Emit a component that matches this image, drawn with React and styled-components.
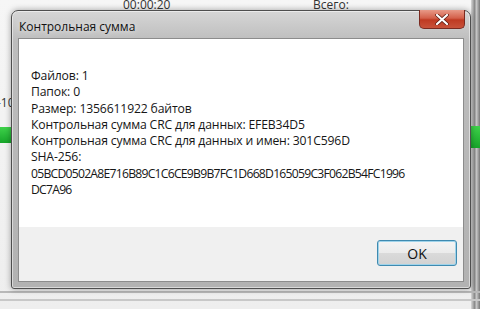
import React from 'react'
import styled, { createGlobalStyle } from 'styled-components'

const Global = createGlobalStyle`
  html, body {
    margin: 0;
    padding: 0;
    background: #f3f3f3;
  }
  body {
    font-family: "Open Sans", "Noto Sans", sans-serif;
    overflow: hidden;
  }
`

const Desktop = styled.div`
  position: relative;
  width: 480px;
  height: 309px;
  box-sizing: border-box;
  padding: 10px 9px 20px 11px;
  background: linear-gradient(180deg, #f6f6f6 0%, #eeeeee 100%);
  overflow: hidden;
`

// things peeking out behind the dialog
const BackText = styled.div`
  position: absolute;
  top: ${p => p.$y}px;
  left: ${p => p.$x}px;
  font-size: 12px;
  color: #333;
`

const BackStrip = styled.div`
  position: absolute;
  top: 0;
  bottom: 0;
  left: ${p => p.$x}px;
  width: ${p => p.$w}px;
  background: linear-gradient(90deg, #d8d8d8, #8a8a8a 40%, #c9c9c9 60%, #777 100%);
`

const GreenBar = styled.div`
  position: absolute;
  top: ${p => p.$y}px;
  left: ${p => p.$x}px;
  width: ${p => p.$w}px;
  height: ${p => p.$h}px;
  background: linear-gradient(180deg, #3ed24a, #17a52a);
`

const BottomLines = styled.div`
  position: absolute;
  left: 0;
  right: 0;
  bottom: 8px;
  height: 6px;
  border-top: 2px solid #b8b8b8;
  border-bottom: 2px solid #c8c8c8;
`

const Window = styled.div`
  position: relative;
  height: 100%;
  box-sizing: border-box;
  display: flex;
  flex-direction: column;
  border: 1px solid #4e4e4e;
  border-radius: 7px 7px 3px 3px;
  background: linear-gradient(180deg, #d6d6d6 0%, #bdbdbd 30px, #b2b2b2 100%);
  padding: 0 6px 6px 6px;
  box-shadow: 0 0 6px rgba(0, 0, 0, 0.35), inset 0 0 0 1px rgba(255, 255, 255, 0.5);
`

const TitleBar = styled.div`
  height: 27px;
  display: flex;
  align-items: center;
  justify-content: space-between;
`

const Title = styled.div`
  font-size: 12px;
  color: #111;
  padding-left: 1px;
  padding-top: 3px;
  text-shadow: 0 0 6px rgba(255, 255, 255, 0.9);
`

const CloseButton = styled.div`
  align-self: flex-start;
  width: 46px;
  height: 19px;
  margin-top: -1px;
  margin-right: -1px;
  box-sizing: border-box;
  border: 1px solid #7a2a20;
  border-top: none;
  border-radius: 0 0 5px 5px;
  background: linear-gradient(180deg, #e89a88 0%, #d3604a 45%, #bf3a22 55%, #c8523a 100%);
  display: flex;
  align-items: center;
  justify-content: center;
`

const Client = styled.div`
  flex: 1;
  display: flex;
  flex-direction: column;
  border: 1px solid #8c8c8c;
  background: #ffffff;
`

const Body = styled.div`
  flex: 1;
  padding: 29px 12px 0 12px;
  font-size: 12.2px;
  line-height: 16.3px;
  letter-spacing: -0.15px;
  color: #161616;
`

const Line = styled.div`
  white-space: nowrap;
  letter-spacing: ${p => (p.$tight ? '-0.76px' : 'inherit')};
`

const Footer = styled.div`
  height: 54px;
  background: #f0f0f0;
  display: flex;
  justify-content: flex-end;
  align-items: flex-start;
  padding: 13px 6px 0 0;
  box-sizing: border-box;
`

const Button = styled.button`
  width: 80px;
  height: 26px;
  border: 1px solid #3f8ab0;
  border-radius: 3px;
  background: linear-gradient(180deg, #f4f4f4 0%, #ebebeb 50%, #dadada 51%, #d2d2d2 100%);
  box-shadow: inset 0 0 0 1px #9fd3ea;
  font-family: "Open Sans", "Noto Sans", sans-serif;
  font-size: 14px;
  color: #111;
  padding: 0;
`

export default function App() {
  const lines = [
    { text: 'Файлов: 1' },
    { text: 'Папок: 0' },
    { text: 'Размер: 1356611922 байтов' },
    { text: 'Контрольная сумма CRC для данных: EFEB34D5' },
    { text: 'Контрольная сумма CRC для данных и имен: 301C596D' },
    { text: 'SHA-256:' },
    { text: '05BCD0502A8E716B89C1C6CE9B9B7FC1D668D165059C3F062B54FC1996', tight: true },
    { text: 'DC7A96', tight: true },
  ]

  return (
    <>
      <Global />
      <Desktop>
        <BackText $x={123} $y={-4}>00:00:20</BackText>
        <BackText $x={313} $y={-4}>Всего:</BackText>
        <BackText $x={-3} $y={94}>-10</BackText>
        <BackStrip $x={471} $w={9} />
        <GreenBar $x={0} $y={127} $w={11} $h={16} />
        <GreenBar $x={466} $y={126} $w={14} $h={22} />
        <BottomLines />
        <Window>
          <TitleBar>
            <Title>Контрольная сумма</Title>
            <CloseButton>
              <svg width="14" height="11" viewBox="0 0 14 11">
                <path d="M2 1 L12 10 M12 1 L2 10" stroke="#5a1a10" strokeWidth="3.6" strokeLinecap="round" />
                <path d="M2 1 L12 10 M12 1 L2 10" stroke="#ffffff" strokeWidth="2.2" strokeLinecap="round" />
              </svg>
            </CloseButton>
          </TitleBar>
          <Client>
            <Body>
              {lines.map((l, i) => (
                <Line key={i} $tight={l.tight}>{l.text}</Line>
              ))}
            </Body>
            <Footer>
              <Button>OK</Button>
            </Footer>
          </Client>
        </Window>
      </Desktop>
    </>
  )
}
